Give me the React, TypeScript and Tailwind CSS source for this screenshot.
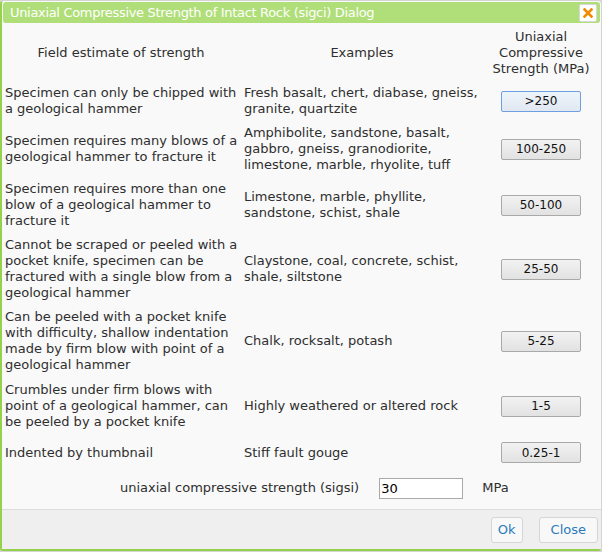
import React from 'react'

const rows = [
  {
    field: 'Specimen can only be chipped with a geological hammer',
    examples: 'Fresh basalt, chert, diabase, gneiss, granite, quartzite',
    value: '>250',
  },
  {
    field: 'Specimen requires many blows of a geological hammer to fracture it',
    examples:
      'Amphibolite, sandstone, basalt, gabbro, gneiss, granodiorite, limestone, marble, rhyolite, tuff',
    value: '100-250',
  },
  {
    field: 'Specimen requires more than one blow of a geological hammer to fracture it',
    examples: 'Limestone, marble, phyllite, sandstone, schist, shale',
    value: '50-100',
  },
  {
    field:
      'Cannot be scraped or peeled with a pocket knife, specimen can be fractured with a single blow from a geological hammer',
    examples: 'Claystone, coal, concrete, schist, shale, siltstone',
    value: '25-50',
  },
  {
    field:
      'Can be peeled with a pocket knife with difficulty, shallow indentation made by firm blow with point of a geological hammer',
    examples: 'Chalk, rocksalt, potash',
    value: '5-25',
  },
  {
    field:
      'Crumbles under firm blows with point of a geological hammer, can be peeled by a pocket knife',
    examples: 'Highly weathered or altered rock',
    value: '1-5',
  },
  {
    field: 'Indented by thumbnail',
    examples: 'Stiff fault gouge',
    value: '0.25-1',
  },
]

function App() {
  return (
    <div
      className="w-[602px] h-[552px] bg-[#d4d4d4] overflow-hidden text-[13px] leading-[16px] text-[#2e2e2e]"
      style={{ fontFamily: '"DejaVu Sans", Verdana, sans-serif' }}
    >
      <div className="mt-[1px] w-[601px] h-[550px] border-2 border-t-0 border-r-0 border-[#94d24c] bg-[#f9f9f9] rounded-[3px] flex flex-col">
        {/* title bar */}
        <div className="mx-[1px] mt-[1px] h-[21px] bg-[#b0de78] rounded-[3px] flex items-center justify-between pl-[7px] pr-[3px]">
          <span className="text-white text-[13px] tracking-[-0.32px]">
            Uniaxial Compressive Strength of Intact Rock (sigci) Dialog
          </span>
          <div className="w-[18px] h-[18px] bg-white border border-[#d8d8d8] rounded-[2px] flex items-center justify-center">
            <svg width="10" height="10" viewBox="0 0 10 10">
              <path d="M1.5 1.5 L8.5 8.5 M8.5 1.5 L1.5 8.5" stroke="#f28a00" strokeWidth="2.6" strokeLinecap="square" />
            </svg>
          </div>
        </div>

        {/* table */}
        <div className="grid grid-cols-[238px_244px_114px] items-center mt-[2px]">
          <div className="px-[3px] py-[4px] text-center">Field estimate of strength</div>
          <div className="px-[4px] py-[4px] text-center">Examples</div>
          <div className="px-[4px] py-[4px] text-center">
            Uniaxial
            <br />
            Compressive
            <br />
            Strength (MPa)
          </div>
          {rows.map((r, i) => {
            const pad = i === rows.length - 1 ? 'pt-[8px] pb-[4px]' : i === rows.length - 2 ? 'pt-[5px] pb-[4px]' : 'py-[4px]'
            return (
              <React.Fragment key={i}>
                <div className={`pl-[3px] pr-[2px] ${pad}`}>{r.field}</div>
                <div className={`pl-[4px] pr-[2px] ${pad}`}>{r.examples}</div>
                <div className={`flex justify-center ${pad}`}>
                  <button
                    className={`w-[80px] h-[21px] text-[12px] text-[#111] rounded-[2px] border bg-gradient-to-b ${
                      i === 0
                        ? 'border-[#6e9fe0] from-[#eef4fb] to-[#e1e8f1]'
                        : 'border-[#a9a9a9] from-[#f2f2f2] to-[#e2e2e2]'
                    }`}
                  >
                    {r.value}
                  </button>
                </div>
              </React.Fragment>
            )
          })}
        </div>

        {/* input row */}
        <div className="flex items-center mt-[10px] h-[22px]">
          <span className="ml-[118px]">uniaxial compressive strength (sigsi)</span>
          <input
            className="ml-[20px] w-[84px] h-[21px] border border-[#a9a9a9] bg-white px-[1px] text-[13px] text-black outline-none"
            defaultValue="30"
          />
          <span className="ml-[19px]">MPa</span>
        </div>

        {/* footer */}
        <div className="mt-auto h-[40px] border-t border-[#dcdcdc] bg-[#efefef] flex items-center justify-end gap-[16px] pr-[3px]">
          <button className="h-[26px] px-[6px] bg-[#f8f8f8] border border-[#d5d5d5] rounded-[3px] text-[#2a7bbd] text-[13px]">
            Ok
          </button>
          <button className="h-[26px] px-[11px] bg-[#f8f8f8] border border-[#d5d5d5] rounded-[3px] text-[#2a7bbd] text-[13px]">
            Close
          </button>
        </div>
      </div>
    </div>
  )
}

export default App
